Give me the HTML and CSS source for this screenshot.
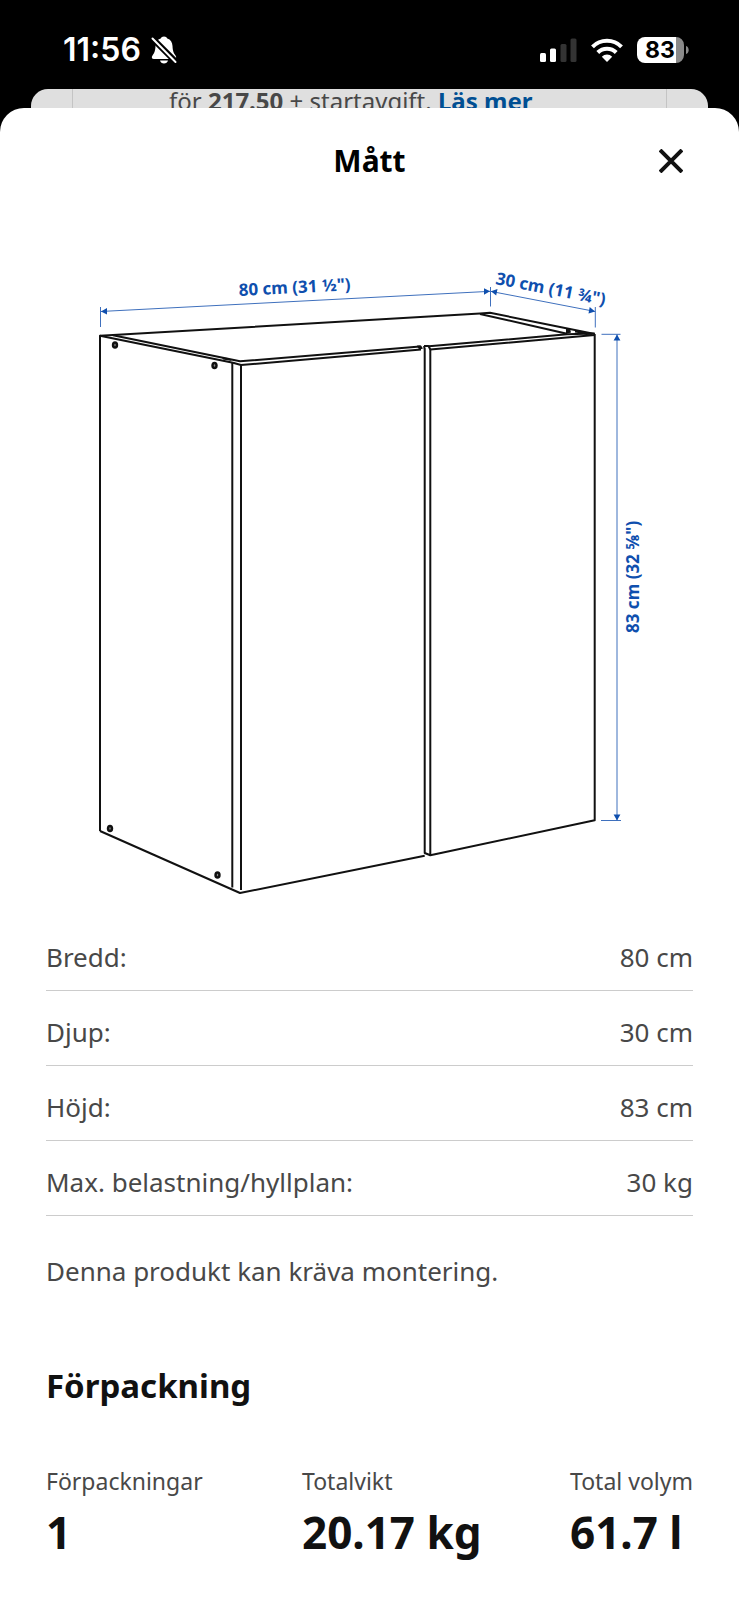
FILE: index.html
```html
<!DOCTYPE html>
<html lang="sv">
<head>
<meta charset="utf-8">
<meta name="viewport" content="width=device-width, initial-scale=1">
<title>Mått</title>
<link rel="stylesheet" href="styles.css">
</head>
<body>
<div class="status">
  <div class="status-left">
    <span class="time">11:56</span>
    <svg class="bell" viewBox="0 0 26 28" width="26" height="28" aria-hidden="true">
      <path fill="#fff" d="M13 .5c1.600 0 2.800.8 3.300 2 3.400 1 5 3.800 5.200 7.500.2 5 1.200 7.200 3 9.400 1.300 1.700.7 3.600-1.500 3.600H3C.8 23 .2 21.100 1.500 19.400c1.800-2.200 2.800-4.400 3-9.400.2-3.700 1.800-6.500 5.200-7.500.5-1.200 1.700-2 3.300-2zM9 24.500h8c-.5 1.900-2 3-4 3s-3.500-1.100-4-3z"/>
      <path stroke="#000" stroke-width="6" d="M1 2l25 25"/>
      <path stroke="#fff" stroke-width="2" stroke-linecap="round" d="M1.500 2.500l23 23.500"/>
    </svg>
  </div>
  <div class="status-right">
    <svg viewBox="0 0 37 26" width="37" height="26" aria-hidden="true">
      <rect x="0" y="16" width="6" height="9" rx="1.500" fill="#fff"/>
      <rect x="10" y="11.500" width="6" height="13.500" rx="1.500" fill="#fff"/>
      <rect x="20.500" y="7" width="6" height="18" rx="1.500" fill="#333"/>
      <rect x="30.500" y="1.500" width="6" height="23.500" rx="1.500" fill="#333"/>
    </svg>
    <svg viewBox="0 0 32 26" width="32" height="26" aria-hidden="true">
      <g fill="none" stroke="#fff" stroke-width="4">
        <path d="M1.500 9.800a20.500 20.500 0 0 1 29 0"/>
        <path d="M6.800 15.500a13 13 0 0 1 18.400 0"/>
      </g>
      <path fill="#fff" d="M16 25l-5.200-5.300a7.400 7.400 0 0 1 10.400 0z"/>
    </svg>
    <svg viewBox="0 0 52 26" width="52" height="26" role="img" aria-label="Batteri 83 %">
      <path fill="#fff" d="M8 0h31v26H8a8 8 0 0 1-8-8V8a8 8 0 0 1 8-8z"/>
      <path fill="#8a8a8a" d="M39 0h0a8 8 0 0 1 8 8v10a8 8 0 0 1-8 8zM49 9c3.600.8 3.600 7.200 0 8z"/>
      <text class="charge" x="23" y="21" text-anchor="middle">83</text>
    </svg>
  </div>
</div>

<div class="peek">
  <p class="peek-text">för <strong>217.50</strong> + startavgift. <a href="#">Läs mer</a></p>
</div>

<main class="sheet">
  <header class="head">
    <h1 class="title">Mått</h1>
    <button class="close" type="button" aria-label="Stäng">
      <svg viewBox="0 0 24 24" width="24" height="24" aria-hidden="true"><path d="M1 1l22 22M23 1l-22 22" stroke="#111" stroke-width="4"/></svg>
    </button>
  </header>

  <svg class="drawing" viewBox="46 214 647 702" role="img" aria-label="Måttritning av väggskåp">
    <g class="edge">
      <path d="M594.700 334V820.300L430.300 855.300L424.700 853V348.500M430.300 855.300V349"/>
      <path d="M100 831V335.800L480 313.500L490 312.800L594.700 334"/>
      <path d="M100 335.800L233 362.700L241 365L421 349.500"/>
      <path d="M113 335.200L240 361.300L420 346.500L421 349M424.700 349L424 346M424 346H428.500L430.300 349.500"/>
      <path d="M429 346.300L567 334.300L594.700 333.500M430.300 349.500L594.700 335"/>
      <path d="M480 314L567 333.700M575 331.500L592 334"/>
      <path d="M232.300 363V887.500M241 365V890"/>
      <path d="M100 831L240 893L424.700 855.700"/>
    </g>
    <g class="solid">
      <path d="M222 357.500l6 .5 4 3-9-1.500zM566 329l4-.5 1 4-5 1.500zM417 345.500h4l2 3-4 1z"/>
      <ellipse cx="115" cy="345" rx="3.200" ry="3.800"/>
      <ellipse cx="214.500" cy="365.500" rx="3.200" ry="3.800"/>
      <ellipse cx="110" cy="828.500" rx="3.200" ry="3.800"/>
      <ellipse cx="217.500" cy="875" rx="3.200" ry="3.800"/>
    </g>
    <g class="glint">
      <ellipse cx="115" cy="345" rx=".7" ry="1.200"/>
      <ellipse cx="214.500" cy="365.500" rx=".7" ry="1.200"/>
      <ellipse cx="110" cy="828.500" rx=".7" ry="1.200"/>
      <ellipse cx="217.500" cy="875" rx=".7" ry="1.200"/>
    </g>
    <g class="measure">
      <path d="M100.500 307V327M100.500 311.500L490.500 291.300M490.500 287V306.500M490.500 291.300L595.300 311.500M595.300 307V327.500"/>
      <path d="M601.500 334.300H620.500M617 334.300V820.500M601 820.500H621"/>
    </g>
    <g class="tip">
      <path d="M101 311.500l6-3.600v6.600zM490 291.300l-6-3.100v6.600zM491 291.300l6.500-2.200-1.300 6.500zM595 311.500l-5.300-4.500-1.200 6.400zM617 334.500l-3.400 6h6.800zM617 820.500l-3.400-6h6.800z"/>
    </g>
    <g class="size">
      <text transform="translate(239 296) rotate(-3)">80 cm (31 ½")</text>
      <text transform="translate(495 284) rotate(11)">30 cm (11 ¾")</text>
      <text transform="translate(639 633) rotate(-90)">83 cm (32 ⅝")</text>
    </g>
  </svg>

  <table class="specs">
    <tbody>
      <tr><th scope="row">Bredd:</th><td>80 cm</td></tr>
      <tr><th scope="row">Djup:</th><td>30 cm</td></tr>
      <tr><th scope="row">Höjd:</th><td>83 cm</td></tr>
      <tr><th scope="row">Max. belastning/hyllplan:</th><td>30 kg</td></tr>
    </tbody>
  </table>
  <p class="note">Denna produkt kan kräva montering.</p>

  <h2 class="subtitle">Förpackning</h2>
  <dl class="totals">
    <div><dt>Förpackningar</dt><dd>1</dd></div>
    <div><dt>Totalvikt</dt><dd>20.17 kg</dd></div>
    <div><dt>Total volym</dt><dd>61.7 l</dd></div>
  </dl>
</main>
</body>
</html>
```

FILE: styles.css
```css
* {
  box-sizing: border-box;
}

body {
  margin: 0;
  min-height: 100vh;
  display: flex;
  flex-direction: column;
  background: #000;
  color: #484848;
  font-family: "Noto Sans", sans-serif;
}

h1, h2, p, dl, dd {
  margin: 0;
}

.status {
  display: flex;
  justify-content: space-between;
  align-items: center;
  height: 89px;
  padding: 10px 50px 0 63px;
  color: #fff;
}

.status-left {
  display: flex;
  align-items: center;
  gap: 10px;
}

.time {
  font: 600 32px/40px Inter, sans-serif;
}

.status-right {
  display: flex;
  align-items: center;
  gap: 14px;
}

.charge {
  font: 700 23px Inter, sans-serif;
  fill: #000;
}

.peek {
  height: 19px;
  margin: 0 31px;
  padding: 0 41px;
  overflow: hidden;
  border-radius: 17px 17px 0 0;
  background: #dfdfdf;
}

.peek-text {
  padding-left: 96px;
  border: solid #c4c4c4;
  border-width: 0 1px;
  font-size: 24px;
  line-height: 24px;
  white-space: nowrap;
}

.peek-text a {
  color: #004f93;
  font-weight: 700;
  text-decoration: none;
}

.sheet {
  flex: 1;
  padding: 0 46px;
  border-radius: 24px 24px 0 0;
  background: #fff;
}

.head {
  display: grid;
  grid-template-columns: 44px 1fr 44px;
  align-items: center;
  height: 106px;
}

.title {
  grid-column: 2;
  color: #000;
  font-size: 30px;
  line-height: 42px;
  text-align: center;
}

.close {
  display: flex;
  justify-content: center;
  padding: 10px;
  border: 0;
  background: none;
}

.drawing {
  display: block;
  width: 100%;
}

.edge {
  fill: none;
  stroke: #111;
  stroke-width: 2;
  stroke-linejoin: round;
}

.solid {
  fill: #111;
}

.glint {
  fill: #888;
}

.measure {
  fill: none;
  stroke: #3f70bd;
  stroke-width: 1;
}

.tip,
.size {
  fill: #0f4fae;
}

.size {
  font-size: 17px;
  font-weight: 700;
}

.specs {
  width: 100%;
  border-collapse: collapse;
  font-size: 26px;
  line-height: 36px;
}

.specs th,
.specs td {
  padding: 23px 0 15px;
  border-bottom: 1px solid #ccc;
  font-weight: 400;
  text-align: left;
}

.specs td {
  text-align: right;
}

.note {
  margin-top: 37px;
  font-size: 26px;
  line-height: 36px;
}

.subtitle {
  margin-top: 74px;
  color: #111;
  font-size: 33px;
  line-height: 46px;
}

.totals {
  display: grid;
  grid-template-columns: 256fr 268fr 123fr;
  margin-top: 56px;
  white-space: nowrap;
}

.totals dt {
  font-size: 23px;
  line-height: 32px;
}

.totals dd {
  margin-top: 4px;
  color: #111;
  font-size: 44px;
  font-weight: 700;
  line-height: 62px;
}
```
